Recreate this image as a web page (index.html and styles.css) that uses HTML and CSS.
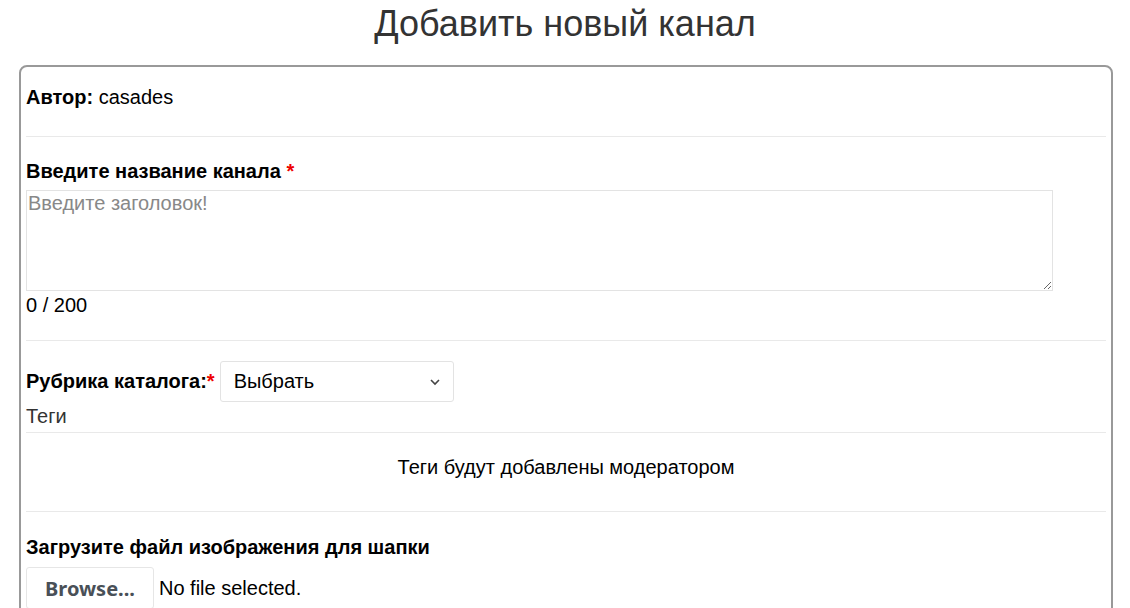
FILE: index.html
```html
<!DOCTYPE html>
<html lang="ru">
<head>
<meta charset="utf-8">
<title>Добавить новый канал</title>
<link rel="stylesheet" href="styles.css">
</head>
<body>
<h1 class="page-title">Добавить новый канал</h1>
<form class="card">
  <div class="section section-author">
    <b>Автор:</b> casades
  </div>
  <div class="section section-name">
    <label class="field-label" for="name">Введите название канала <span class="req">*</span></label>
    <textarea id="name" class="name-input" placeholder="Введите заголовок!" autofocus></textarea>
    <div class="counter">0 / 200</div>
  </div>
  <div class="section section-rubric">
    <div class="rubric-row">
      <label class="field-label">Рубрика каталога:<span class="req">*</span></label>
      <div class="select">
        <span>Выбрать</span>
        <svg class="chev" width="12" height="8" viewBox="0 0 12 8"><path d="M2 2 L6 6 L10 2" fill="none" stroke="#444" stroke-width="1.6"/></svg>
      </div>
    </div>
    <div class="tags-label">Теги</div>
  </div>
  <div class="section section-tags">
    Теги будут добавлены модератором
  </div>
  <div class="section section-upload">
    <label class="field-label">Загрузите файл изображения для шапки</label>
    <div class="file-row">
      <span class="browse">Browse...</span>
      <span class="file-status">No file selected.</span>
    </div>
  </div>
</form>
</body>
</html>
```
FILE: styles.css
```css
html, body {
  margin: 0;
  padding: 0;
  background: #fff;
}
body {
  font-family: "Liberation Sans", Arial, sans-serif;
  font-size: 20px;
  line-height: 23px;
  color: #000;
  overflow: hidden;
}
.page-title {
  margin: 0;
  padding-top: 3px;
  height: 65px;
  box-sizing: border-box;
  text-align: center;
  font-weight: normal;
  font-size: 36px;
  line-height: 41px;
  color: #333;
}
.card {
  margin: 0 17px 0 19px;
  border: 2px solid #999;
  border-radius: 8px;
  padding: 0 5px;
  height: 600px;
}
.section {
  border-bottom: 1px solid #e9e9e9;
}
.section-author {
  padding: 19px 0 27px;
}
.section-name {
  padding: 23px 0 23px;
}
.field-label {
  display: block;
  font-weight: bold;
}
.req {
  color: #e00;
}
.name-input {
  display: block;
  box-sizing: border-box;
  width: 1027px;
  height: 101px;
  margin: 7px 0 0;
  border: 1px solid #e3e3e3;
  padding: 1px 1px;
  font-family: "Liberation Sans", Arial, sans-serif;
  font-size: 20px;
  line-height: 23px;
  color: #000;
  outline: none;
  resize: vertical;
}
.name-input::placeholder {
  color: #888;
}
.counter {
  margin-top: 3px;
}
.section-rubric {
  padding: 20px 0 4px;
}
.rubric-row {
  display: flex;
  align-items: center;
}
.rubric-row .field-label {
  display: inline-block;
  margin-right: 5px;
}
.select {
  box-sizing: border-box;
  width: 234px;
  height: 41px;
  border: 1px solid #e3e3e3;
  border-radius: 3px;
  display: flex;
  align-items: center;
  justify-content: space-between;
  padding: 0 12px 0 13px;
}
.chev {
  display: block;
}
.tags-label {
  margin-top: 3px;
  color: #333;
}
.section-tags {
  padding: 23px 0 32px;
  text-align: center;
}
.section-upload {
  border-bottom: none;
  padding-top: 24px;
}
.file-row {
  display: flex;
  align-items: center;
  margin-top: 8px;
}
.browse {
  box-sizing: border-box;
  width: 128px;
  height: 42px;
  display: flex;
  align-items: center;
  justify-content: center;
  border: 1px solid #e6e6e6;
  border-radius: 3px;
  background: #fff;
  color: #495057;
  font-family: "Noto Sans", "Open Sans", sans-serif;
  font-size: 20px;
  font-weight: bold;
  margin-right: 5px;
}
.file-status {
  color: #000;
}
```
